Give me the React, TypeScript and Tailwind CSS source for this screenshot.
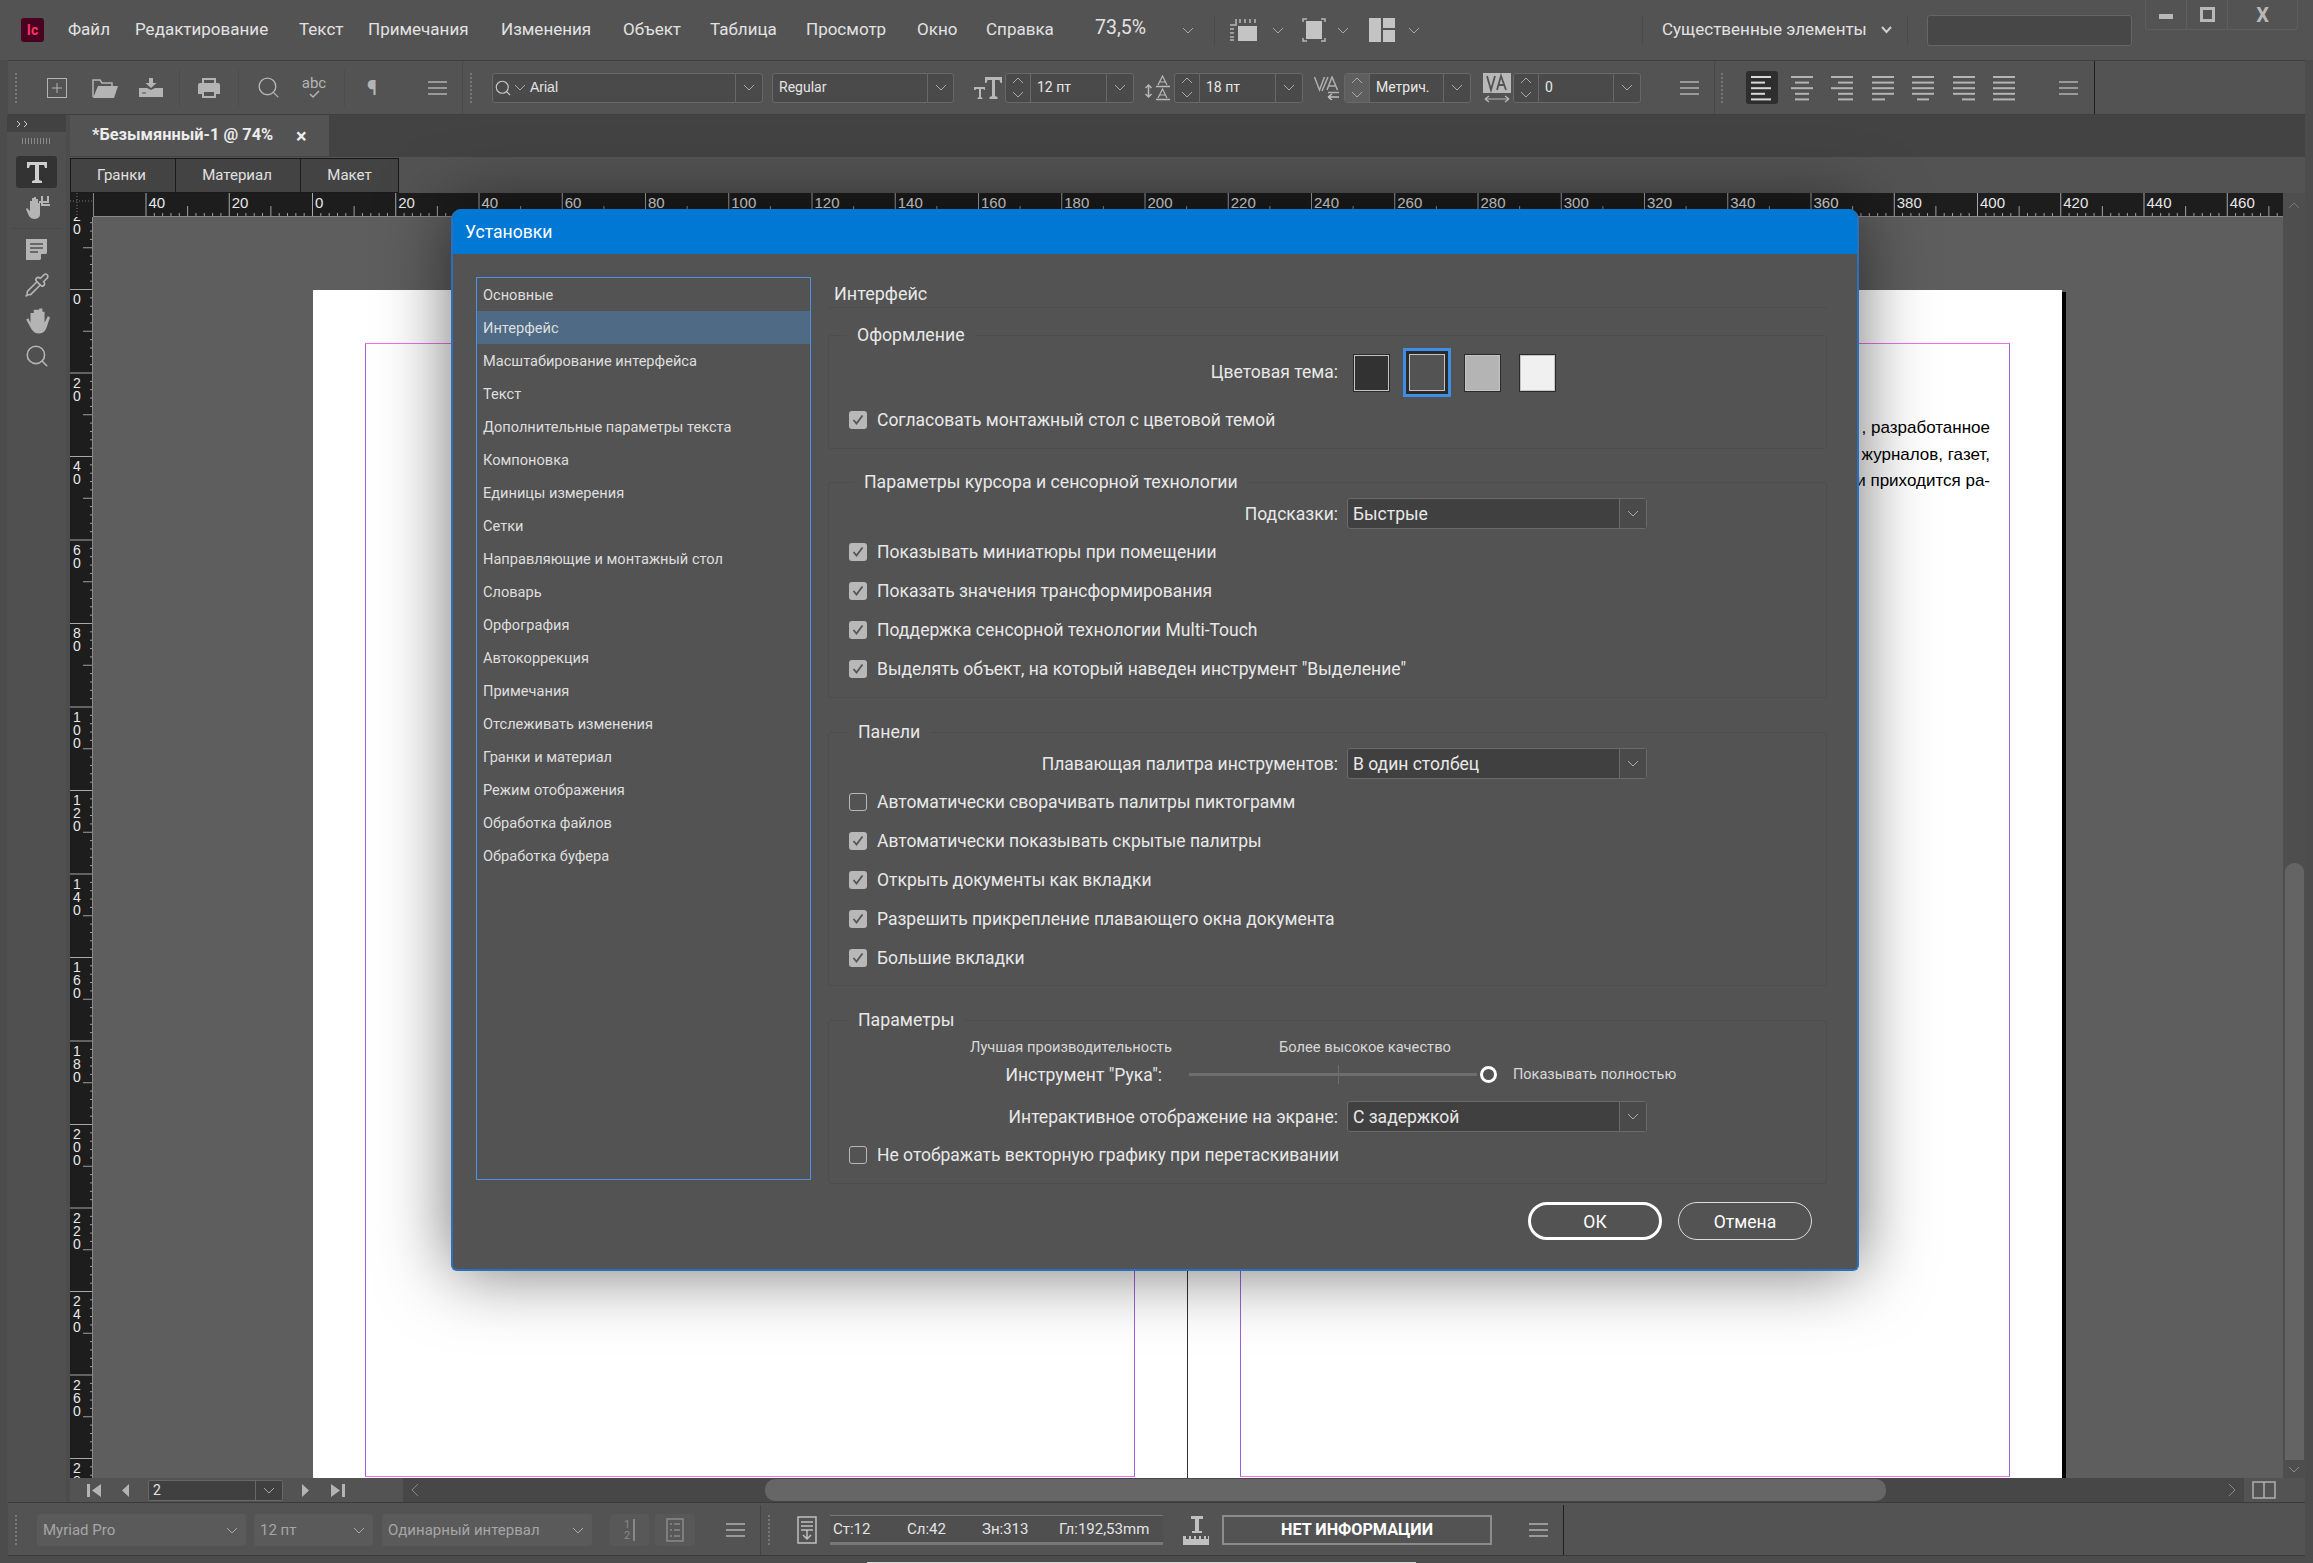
import type { ReactNode } from 'react'
import { Search, Pipette } from 'lucide-react'

const sideItems = [
  'Основные', 'Интерфейс', 'Масштабирование интерфейса', 'Текст', 'Дополнительные параметры текста',
  'Компоновка', 'Единицы измерения', 'Сетки', 'Направляющие и монтажный стол', 'Словарь', 'Орфография',
  'Автокоррекция', 'Примечания', 'Отслеживать изменения', 'Гранки и материал', 'Режим отображения',
  'Обработка файлов', 'Обработка буфера',
]

const menuItems = [
  { label: 'Файл', w: 'w-[67px]' },
  { label: 'Редактирование', w: 'w-[164px]' },
  { label: 'Текст', w: 'w-[69px]' },
  { label: 'Примечания', w: 'w-[133px]' },
  { label: 'Изменения', w: 'w-[122px]' },
  { label: 'Объект', w: 'w-[87px]' },
  { label: 'Таблица', w: 'w-[96px]' },
  { label: 'Просмотр', w: 'w-[111px]' },
  { label: 'Окно', w: 'w-[69px]' },
  { label: 'Справка', w: 'w-[109px]' },
]

const Chevron = ({ up = false, color = '#a8a8a8' }: { up?: boolean; color?: string }) => (
  <svg width="12" height="7" viewBox="0 0 12 7" className="flex-none">
    <path d={up ? 'M1 6L6 1L11 6' : 'M1 1L6 6L11 1'} fill="none" stroke={color} strokeWidth="1" />
  </svg>
)

const Burger = () => (
  <div className="flex w-[19px] flex-none flex-col gap-[4px]">
    <div className="h-[2px] bg-[#999999]" />
    <div className="h-[2px] bg-[#999999]" />
    <div className="h-[2px] bg-[#999999]" />
  </div>
)

const Grip = () => (
  <div className="h-[30px] w-[2px] flex-none border-l-2 border-dotted border-[#777777]" />
)

const Sep = ({ cls }: { cls: string }) => <div className={`h-[36px] w-px flex-none bg-[#4c4c4c] ${cls}`} />

const Field = ({ w, arrow, children }: { w: string; arrow: string; children: ReactNode }) => (
  <div className={`flex h-[30px] flex-none items-center rounded-[3px] border border-[#686868] bg-[#4a4a4a] text-[14px] text-[#e4e4e4] ${w}`}>
    <div className="min-w-0 flex-1 truncate pl-[6px]">{children}</div>
    <div className={`flex h-full flex-none items-center justify-center border-l border-[#686868] ${arrow}`}>
      <Chevron />
    </div>
  </div>
)

const Spin = ({ hot = false }: { hot?: boolean }) => (
  <div className={`flex h-full w-[25px] flex-none flex-col items-center justify-center gap-[7px] border-r border-[#686868] ${hot ? 'bg-[#5f5f5f]' : ''}`}>
    <Chevron up />
    <Chevron />
  </div>
)

const Combo = ({ w, label, hot = false }: { w: string; label: string; hot?: boolean }) => (
  <div className={`flex h-[30px] flex-none items-center rounded-[3px] border border-[#686868] bg-[#4a4a4a] text-[14px] text-[#e8e8e8] ${w}`}>
    <Spin hot={hot} />
    <div className="flex-1 pl-[6px]">{label}</div>
    <div className="flex h-full w-[27px] flex-none items-center justify-center border-l border-[#686868]">
      <Chevron />
    </div>
  </div>
)

const alignRows: [number, number][][] = [
  [[0, 20], [0, 14], [0, 20], [0, 14], [0, 20]],
  [[0, 22], [4, 18], [0, 22], [4, 18], [4, 18]],
  [[0, 22], [7, 22], [0, 22], [7, 22], [7, 22]],
  [[0, 22], [0, 22], [0, 22], [0, 22], [0, 13]],
  [[0, 22], [0, 22], [0, 22], [0, 22], [5, 17]],
  [[0, 22], [0, 22], [0, 22], [0, 22], [9, 22]],
  [[0, 22], [0, 22], [0, 22], [0, 22], [0, 22]],
]

const AlignIcon = ({ rows, color = '#b4b4b4' }: { rows: [number, number][]; color?: string }) => (
  <svg width="22" height="26" viewBox="0 0 22 26" className="flex-none">
    {rows.map(([a, b], i) => (
      <rect key={i} x={a} y={1 + i * 5.6} width={b - a} height="2" fill={color} />
    ))}
  </svg>
)

const TopIcons = () => (
  <>
    <svg width="20" height="20" viewBox="0 0 20 20" className="ml-[30px] flex-none">
      <rect x="0.5" y="0.5" width="19" height="19" fill="none" stroke="#b4b4b4" />
      <path d="M10 5v10M5 10h10" stroke="#b4b4b4" />
    </svg>
    <svg width="26" height="20" viewBox="0 0 26 20" className="ml-[25px] flex-none">
      <path d="M1 19V2h7l2 3h10v3" fill="none" stroke="#b4b4b4" strokeWidth="1.5" />
      <path d="M6 8h20l-4 12H1z" fill="#b4b4b4" />
    </svg>
    <svg width="24" height="20" viewBox="0 0 24 20" className="ml-[21px] flex-none">
      <path d="M10 0h4v5h3.500l-5.500 5-5.500-5H10z" fill="#b4b4b4" />
      <path d="M0 10h8l4 2 4-2h8v9H0z" fill="#b4b4b4" />
      <path d="M3 15h4" stroke="#535353" />
    </svg>
    <Sep cls="ml-[16px]" />
    <svg width="22" height="20" viewBox="0 0 22 20" className="ml-[18px] flex-none">
      <path d="M5 6V1h12v5" fill="none" stroke="#b4b4b4" strokeWidth="2" />
      <path d="M2 5h18a2 2 0 0 1 2 2v9h-5v-4H5v4H0V7a2 2 0 0 1 2-2z" fill="#b4b4b4" />
      <path d="M5 13h12v6H5z" fill="none" stroke="#b4b4b4" strokeWidth="2" />
    </svg>
    <Sep cls="ml-[18px]" />
    <Search size={25} strokeWidth={1.3} color="#b4b4b4" className="ml-[17px] flex-none" />
    <div className="ml-[21px] flex w-[24px] flex-none flex-col items-center text-[15px] leading-[14px] text-[#b4b4b4]">
      <span>abc</span>
      <svg width="11" height="9" viewBox="0 0 11 9">
        <path d="M1 4l3 3 6-6" fill="none" stroke="#b4b4b4" strokeWidth="1.5" />
      </svg>
    </div>
    <Sep cls="ml-[18px]" />
    <span className="ml-[22px] w-[13px] flex-none text-[20px] font-bold leading-none text-[#b4b4b4]">¶</span>
  </>
)

const Ruler = () => {
  const marks = Array.from({ length: 26 }, (_, i) => i - 2)
  const minors = Array.from({ length: 270 }, (_, i) => i)
  const x0 = 242
  return (
    <svg width="2213" height="24" viewBox="0 0 2213 24" className="block flex-none">
      <rect width="2213" height="24" fill="#1d1d1d" />
      <path d="M0 8h23M7 0v24" stroke="#777777" strokeDasharray="1 2" />
      <rect x="23" width="1" height="24" fill="#888888" />
      {minors.map((i) => {
        const x = x0 - 166.5 + i * 8.325
        if (x < 24 || x > 2213 || i % 10 === 0) return null
        return <rect key={i} x={x} y={i % 5 === 0 ? 13 : 20} width="1" height={i % 5 === 0 ? 10 : 3} fill="#a0a0a0" />
      })}
      {marks.map((m) => {
        const x = x0 + m * 83.25
        return (
          <g key={m}>
            <rect x={x} y="0" width="1" height="24" fill="#a8a8a8" />
            <text x={x + 3} y="15" fill="#e8e8e8" fontSize="15" fontFamily="'Liberation Sans', sans-serif">
              {Math.abs(m) * 20}
            </text>
          </g>
        )
      })}
      <rect x="23" y="23" width="2190" height="1" fill="#8a8a8a" />
    </svg>
  )
}

const VRuler = () => {
  const marks = Array.from({ length: 16 }, (_, i) => i - 1)
  const minors = Array.from({ length: 160 }, (_, i) => i - 10)
  return (
    <svg width="23" height="1261" viewBox="0 0 23 1261" className="block flex-none">
      <rect width="23" height="1261" fill="#1d1d1d" />
      {minors.map((i) =>
        i % 10 === 0 ? null : (
          <rect key={i} x={i % 5 === 0 ? 13 : 20} y={72 + i * 8.35} width={i % 5 === 0 ? 10 : 3} height="1" fill="#a0a0a0" />
        ),
      )}
      {marks.map((m) => {
        const y = 72 + m * 83.5
        return (
          <g key={m}>
            <rect x="0" y={y} width="23" height="1" fill="#a8a8a8" />
            {String(Math.abs(m) * 20).split('').map((d, k) => (
              <text key={k} x="7" y={y + 15 + k * 13} fill="#e8e8e8" fontSize="14" textAnchor="middle" fontFamily="'Liberation Sans', sans-serif">
                {d}
              </text>
            ))}
          </g>
        )
      })}
      <rect x="22" width="1" height="1261" fill="#8a8a8a" />
    </svg>
  )
}

const Tools = () => (
  <div className="flex w-[59px] flex-col bg-[#505050]">
    <div className="flex h-[17px] items-center pl-[3px] text-[13px] leading-none text-[#cfcfcf] bg-[#424242]">
      <svg width="14" height="8" viewBox="0 0 14 8" className="ml-[6px]">
        <path d="M1 1l3 3-3 3M8 1l3 3-3 3" fill="none" stroke="#d0d0d0" />
      </svg>
    </div>
    <div className="mx-[15px] mt-[6px] h-[6px] border-x-0 bg-[repeating-linear-gradient(90deg,#8a8a8a_0,#8a8a8a_1px,transparent_1px,transparent_3px)]" />
    <div className="ml-[9px] mt-[12px] flex h-[32px] w-[41px] items-center justify-center rounded-[3px] bg-[#333333]">
      <svg width="22" height="23" viewBox="0 0 22 23">
        <path d="M1 1h20v6h-2l-1-3h-5v15l3 1v2H6v-2l3-1V4H4L3 7H1z" fill="#cfcfcf" />
      </svg>
    </div>
    <div className="mt-[5px] flex h-[30px] items-center justify-center">
      <svg width="30" height="26" viewBox="0 0 30 26">
        <path d="M4 14l3 7c2 3 6 4 9 2 2-1 2-3 2-5V8l-2 0v5V4h-2v8V2h-2v10V3H10v10V6H8v10l-3-3z" fill="#b4b4b4" />
        <path d="M17 7h9V1M20 1v9h8" fill="none" stroke="#b4b4b4" strokeWidth="2" />
      </svg>
    </div>
    <div className="mx-[4px] mt-[5px] h-px bg-[#4a4a4a]" />
    <div className="mt-[9px] flex h-[22px] items-center justify-center">
      <svg width="21" height="21" viewBox="0 0 21 21">
        <path d="M0 0h21v14l-7 7H0z" fill="#b4b4b4" />
        <path d="M4 5h13M4 9h13M4 13h8" stroke="#505050" strokeWidth="1.5" />
        <path d="M15 21v-6h6z" fill="#505050" />
      </svg>
    </div>
    <div className="mt-[9px] flex h-[32px] items-center justify-center">
      <Pipette size={26} strokeWidth={1.5} color="#b4b4b4" />
    </div>
    <div className="mt-[3px] flex h-[32px] items-center justify-center">
      <svg width="26" height="27" viewBox="0 0 24 24">
        <path d="M2 11l5 9c2 3 4 4 7 4 4 0 6-3 7-6l3-9-2-1-3 6V4h-2v7V1h-3v10V2H9v10V5H6v9l-2-4z" fill="#b4b4b4" />
      </svg>
    </div>
    <div className="mt-[4px] flex h-[32px] items-center justify-center">
      <Search size={26} strokeWidth={1.5} color="#b4b4b4" />
    </div>
  </div>
)

const Check = ({ label, on = true }: { label: string; on?: boolean }) => (
  <div className="flex h-[39px] flex-none items-center pl-[20px]">
    {on ? (
      <div className="flex h-[18px] w-[18px] flex-none items-center justify-center rounded-[3px] bg-[#b8b8b8]">
        <svg width="12" height="11" viewBox="0 0 12 11">
          <path d="M1.5 6l3 3.500 6-8" fill="none" stroke="#555555" strokeWidth="1.8" />
        </svg>
      </div>
    ) : (
      <div className="h-[18px] w-[18px] flex-none rounded-[3px] border border-[#b8b8b8]" />
    )}
    <span className="ml-[10px] whitespace-nowrap pt-[2px]">{label}</span>
  </div>
)

const SelectRow = ({ label, value, cls = '' }: { label: string; value: string; cls?: string }) => (
  <div className={`flex h-[31px] flex-none items-center ${cls}`}>
    <div className="w-[509px] flex-none whitespace-nowrap pt-[2px] text-right">{label}</div>
    <div className="ml-[9px] flex h-[31px] w-[300px] flex-none items-center rounded-[3px] border border-[#6a6a6a] bg-[#404040]">
      <div className="flex-1 pl-[5px] pt-[2px]">{value}</div>
      <div className="flex h-full w-[27px] items-center justify-center border-l border-[#6a6a6a] bg-[#4a4a4a]">
        <Chevron />
      </div>
    </div>
  </div>
)

const Group = ({ title, left, cls, children }: { title: string; left: string; cls: string; children: ReactNode }) => (
  <div className={`relative flex flex-none flex-col rounded-[3px] border border-[#4d4d4d] ${cls}`}>
    <div className={`absolute top-[-13px] h-[24px] bg-[#535353] px-[10px] text-[17.7px] leading-[25px] text-[#e8e8e8] ${left}`}>{title}</div>
    {children}
  </div>
)

const Swatch = ({ bg }: { bg: string }) => (
  <div className={`h-[38px] w-[37px] flex-none border border-[#2a2a2a] shadow-[inset_0_0_0_1px_#c4c4c4] ${bg}`} />
)

const Dialog = () => (
  <div className="absolute left-[451px] top-[209px] z-10 flex h-[1062px] w-[1408px] flex-col overflow-hidden rounded-[10px] rounded-b-[6px] border-2 border-t-0 border-[#2c6fbf] bg-[#535353] font-['Roboto',sans-serif] text-[17.5px] text-[#e8e8e8] shadow-[0_0_70px_rgba(0,0,0,0.55)]">
    <div className="-mx-[2px] flex h-[45px] flex-none items-center bg-[#0078d4] pl-[14px] pt-[2px] text-[17.600px] text-white">Установки</div>
    <div className="flex flex-1 pl-[23px] pt-[23px]">
      <div className="h-[903px] w-[335px] flex-none border border-[#4b93e0]">
        {sideItems.map((s) => (
          <div key={s} className={`flex h-[33px] items-center pl-[6px] pt-[2px] text-[14.6px] text-[#dedede] ${s === 'Интерфейс' ? 'bg-[#4e6a85]' : ''}`}>
            {s}
          </div>
        ))}
      </div>
      <div className="ml-[17px] flex w-[999px] flex-none flex-col">
        <div className="h-[31px] flex-none border-b border-[#4d4d4d] pl-[6px] text-[18px] leading-[33px]">Интерфейс</div>
        <Group title="Оформление" left="left-[18px]" cls="mt-[27px] h-[114px]">
          <div className="mt-[12px] flex h-[49px] flex-none items-center">
            <div className="w-[509px] flex-none text-right">Цветовая тема:</div>
            <div className="ml-[15px]"><Swatch bg="bg-[#323232]" /></div>
            <div className="ml-[13px] flex h-[49px] w-[48px] flex-none items-center justify-center border-[3px] border-[#3d8fe6] bg-[#2a2a2a]">
              <div className="h-[37px] w-[36px] border border-[#c4c4c4] bg-[#535353]" />
            </div>
            <div className="ml-[13px]"><Swatch bg="bg-[#b4b4b4]" /></div>
            <div className="ml-[18px]"><Swatch bg="bg-[#f0f0f0]" /></div>
          </div>
          <div className="mt-[3px]">
            <Check label="Согласовать монтажный стол с цветовой темой" />
          </div>
        </Group>
        <Group title="Параметры курсора и сенсорной технологии" left="left-[25px]" cls="mt-[33px] h-[216px]">
          <SelectRow label="Подсказки:" value="Быстрые" cls="mt-[15px]" />
          <div className="mt-[3px] flex flex-col">
            <Check label="Показывать миниатюры при помещении" />
            <Check label="Показать значения трансформирования" />
            <Check label="Поддержка сенсорной технологии Multi-Touch" />
            <Check label='Выделять объект, на который наведен инструмент "Выделение"' />
          </div>
        </Group>
        <Group title="Панели" left="left-[19px]" cls="mt-[34px] h-[254px]">
          <SelectRow label="Плавающая палитра инструментов:" value="В один столбец" cls="mt-[15px]" />
          <div className="mt-[3px] flex flex-col">
            <Check label="Автоматически сворачивать палитры пиктограмм" on={false} />
            <Check label="Автоматически показывать скрытые палитры" />
            <Check label="Открыть документы как вкладки" />
            <Check label="Разрешить прикрепление плавающего окна документа" />
            <Check label="Большие вкладки" />
          </div>
        </Group>
        <Group title="Параметры" left="left-[19px]" cls="mt-[34px] h-[164px]">
          <div className="mt-[16px] flex h-[20px] flex-none items-center pt-[1px] text-[14.7px] text-[#d8d8d8]">
            <div className="ml-[141px] w-[309px] flex-none whitespace-nowrap">Лучшая производительность</div>
            <div className="whitespace-nowrap">Более высокое качество</div>
          </div>
          <div className="mt-[2px] flex h-[30px] flex-none items-center">
            <div className="w-[333px] flex-none pt-[2px] text-right">Инструмент "Рука":</div>
            <div className="relative ml-[27px] h-[3px] w-[288px] flex-none bg-[#6e6e6e]">
              <div className="absolute left-[149px] top-[-8px] h-[19px] w-px bg-[#6e6e6e]" />
            </div>
            <div className="ml-[3px] h-[17px] w-[17px] flex-none rounded-full border-[3px] border-white" />
            <div className="ml-[16px] whitespace-nowrap pt-[1px] text-[14.5px] text-[#d8d8d8]">Показывать полностью</div>
          </div>
          <SelectRow label="Интерактивное отображение на экране:" value="С задержкой" cls="mt-[12px]" />
          <div className="mt-[3px]">
            <Check label="Не отображать векторную графику при перетаскивании" on={false} />
          </div>
        </Group>
        <div className="mt-[18px] flex flex-none justify-end gap-[16px] pr-[15px]">
          <button className="h-[38px] w-[134px] rounded-full border-[3px] border-white pt-[2px] text-[17.5px] text-white">ОК</button>
          <button className="h-[38px] w-[134px] rounded-full border border-[#dddddd] pt-[2px] text-[17.5px] text-white">Отмена</button>
        </div>
      </div>
    </div>
  </div>
)

export default function App() {
  return (
    <div className="relative flex h-[1563px] w-[2313px] flex-col overflow-hidden bg-[#4c4c4c] font-['Roboto',sans-serif]">
      {/* menu bar */}
      <div className="flex h-[60px] flex-none items-center bg-[#535353] text-[17px] text-[#e2e2e2]">
        <div className="ml-[21px] flex h-[24px] w-[23px] flex-none items-center justify-center rounded-[3px] bg-[#49021f] text-[14px] font-bold text-[#ff3366]">Ic</div>
        <div className="ml-[24px] flex flex-none">
          {menuItems.map((m) => (
            <div key={m.label} className={`whitespace-nowrap ${m.w}`}>{m.label}</div>
          ))}
        </div>
        <div className="w-[87px] flex-none pb-[4px] text-[19.5px]">73,5%</div>
        <Chevron />
        <div className="ml-[20px] h-[30px] w-px flex-none bg-[#4a4a4a]" />
        <svg width="27" height="22" viewBox="0 0 27 22" className="ml-[15px] flex-none">
          <path d="M8 7h19v15H8z" fill="#c4c4c4" />
          <path d="M0 6h6V0M0 10h4M0 14h4M0 18h4M0 21h4M10 0v4M15 0v4M20 0v4M25 0v4" fill="none" stroke="#b8b8b8" strokeWidth="1.5" />
        </svg>
        <div className="ml-[15px]"><Chevron /></div>
        <svg width="24" height="24" viewBox="0 0 24 24" className="ml-[18px] flex-none">
          <path d="M4 3h16v18H4z" fill="#c4c4c4" />
          <path d="M1 4V1h4M19 1h4v3M1 20v3h4M19 23h4v-3" fill="none" stroke="#b8b8b8" strokeWidth="1.5" />
        </svg>
        <div className="ml-[11px]"><Chevron /></div>
        <svg width="26" height="24" viewBox="0 0 26 24" className="ml-[20px] flex-none">
          <path d="M0 0h12v24H0zM14 0h12v10H14zM14 12h12v12H14z" fill="#c4c4c4" />
        </svg>
        <div className="ml-[13px]"><Chevron /></div>
        <div className="ml-[222px] h-[30px] w-px flex-none bg-[#4a4a4a]" />
        <div className="ml-[19px] w-[219px] flex-none whitespace-nowrap">Существенные элементы</div>
        <svg width="11" height="8" viewBox="0 0 11 8" className="flex-none">
          <path d="M1 1l4.500 5L10 1" fill="none" stroke="#d0d0d0" strokeWidth="2" />
        </svg>
        <div className="ml-[15px] h-[30px] w-px flex-none bg-[#4a4a4a]" />
        <div className="ml-[19px] h-[31px] w-[205px] flex-none rounded-[3px] border border-[#666666] bg-[#474747]" />
        <div className="mb-[29px] ml-[13px] flex h-[30px] w-[153px] flex-none items-center self-start rounded-b-[3px] border border-t-0 border-[#5e5e5e]">
          <div className="flex h-full w-[41px] items-center justify-center border-r border-[#5e5e5e]">
            <div className="mt-[4px] h-[5px] w-[14px] bg-[#b8b8b8]" />
          </div>
          <div className="flex h-full w-[41px] items-center justify-center border-r border-[#5e5e5e]">
            <div className="h-[15px] w-[15px] border-[3px] border-[#b8b8b8]" />
          </div>
          <div className="flex-1 text-center text-[20px] font-bold text-[#b8b8b8]">X</div>
        </div>
      </div>

      {/* control bar */}
      <div className="mx-[8px] flex h-[55px] flex-none items-center border-y border-[#3f3f3f] bg-[#535353]">
        <div className="ml-[7px]"><Grip /></div>
        <TopIcons />
        <div className="ml-[48px]"><Burger /></div>
        <div className="ml-[15px] h-full w-px flex-none bg-[#484848]" />
        <div className="ml-[7px]"><Grip /></div>
        <div className="ml-[20px]">
          <Field w="w-[271px]" arrow="w-[27px]">
            <div className="flex items-center gap-[2px] pl-0">
              <Search size={18} strokeWidth={1.5} color="#c8c8c8" className="-ml-[5px]" />
              <Chevron />
              <span className="ml-[2px] font-['Liberation_Sans',sans-serif]">Arial</span>
            </div>
          </Field>
        </div>
        <div className="ml-[9px]"><Field w="w-[182px]" arrow="w-[26px]">Regular</Field></div>
        <svg width="28" height="24" viewBox="0 0 28 24" className="ml-[20px] flex-none">
          <path d="M11 1h17v6h-1.500l-1-3H21v16l2.500 1v2h-8v-2l2.500-1V4h-4.500l-1 3H11z" fill="#b8b8b8" />
          <path d="M0 11h11v3h-1l-.5-1H7v8l1.500 1v1h-5v-1L5 21v-8H2l-.5 1H0z" fill="#b8b8b8" />
        </svg>
        <div className="ml-[3px]"><Combo w="w-[129px]" label="12 пт" /></div>
        <svg width="26" height="26" viewBox="0 0 26 26" className="ml-[11px] flex-none">
          <path d="M3.500 10v12M0.500 13l3-3 3 3M0.500 19l3 3 3-3" fill="none" stroke="#b8b8b8" strokeWidth="1.5" />
          <path d="M13 10l4.500-9 4.500 9M14.500 7h6M13 23l4.500-9 4.500 9M14.500 20h6" fill="none" stroke="#b8b8b8" strokeWidth="1.2" />
          <path d="M11 11.500h14M11 24.500h14" stroke="#b8b8b8" strokeWidth="1.5" />
        </svg>
        <div className="ml-[3px]"><Combo w="w-[129px]" label="18 пт" /></div>
        <svg width="26" height="24" viewBox="0 0 26 24" className="ml-[11px] flex-none">
          <path d="M0.500 1l5 13 5-13M8 15l6-14M13 14l5-13 5.500 13M15 10h7" fill="none" stroke="#b0b0b0" strokeWidth="1.5" />
          <path d="M14 16.500h11" stroke="#b0b0b0" strokeWidth="1.5" />
          <path d="M25 21H14M14 21l4-3M14 21l4 3" fill="none" stroke="#c0c0c0" strokeWidth="1.5" />
        </svg>
        <div className="ml-[4px]"><Combo w="w-[127px]" label="Метрич." hot /></div>
        <svg width="28" height="30" viewBox="0 0 28 30" className="ml-[12px] flex-none">
          <rect width="28" height="20" fill="#b8b8b8" />
          <path d="M4 3l4 14 4-14M14 17l4-14 5 14M15 12h7" fill="none" stroke="#535353" strokeWidth="1.8" />
          <path d="M2 26h24M2 26l4-3M2 26l4 3M26 26l-4-3M26 26l-4 3" fill="none" stroke="#b8b8b8" strokeWidth="1.2" />
        </svg>
        <div className="ml-[2px]"><Combo w="w-[128px]" label="0" /></div>
        <div className="ml-[39px]"><Burger /></div>
        <div className="ml-[15px] h-full w-px flex-none bg-[#484848]" />
        <div className="ml-[6px]"><Grip /></div>
        <div className="ml-[23px] flex h-[33px] w-[32px] flex-none items-center justify-center rounded-[3px] bg-[#2e2e2e]">
          <AlignIcon rows={alignRows[0]} color="#d8d8d8" />
        </div>
        <div className="ml-[13px] flex flex-none gap-[18.4px]">
          {alignRows.slice(1).map((r, i) => (
            <AlignIcon key={i} rows={r} />
          ))}
        </div>
        <div className="ml-[44px]"><Burger /></div>
        <div className="ml-[16px] h-full w-px flex-none bg-[#1f1f1f]" />
      </div>

      {/* tool strip + document */}
      <div className="flex h-[1387px] flex-none pl-[7px]">
        <Tools />
        <div className="ml-[4px] flex w-[2235px] flex-none flex-col">
          <div className="flex h-[42px] flex-none bg-[#434343]">
            <div className="flex h-[41px] w-[259px] flex-none items-center bg-[#535353] pl-[22px] text-[16.4px] font-bold text-[#ececec]">
              <span className="w-[204px] whitespace-nowrap">*Безымянный-1 @ 74%</span>
              <span className="text-[20px] leading-none">×</span>
            </div>
          </div>
          <div className="flex h-[36px] flex-none items-start bg-[#535353] pt-px">
            <div className="flex h-[35px] flex-none border border-[#1a1a1a] text-[15px] text-[#e0e0e0]">
              <div className="flex w-[105px] items-center justify-center border-r border-[#1a1a1a] bg-[#434343] pr-[3px]">Гранки</div>
              <div className="flex w-[125px] items-center justify-center border-r border-[#1a1a1a] bg-[#434343] pr-[2px]">Материал</div>
              <div className="flex w-[97px] items-center justify-center bg-[#434343]">Макет</div>
            </div>
          </div>
          <div className="flex h-[1285px] flex-none">
            <div className="flex w-[2213px] flex-none flex-col">
              <Ruler />
              <div className="flex h-[1261px] flex-none">
                <VRuler />
                <div className="relative flex-1 overflow-hidden bg-[#5e5e5e]">
                  {/* pasteboard: the spread sits at a free position */}
                  <div className="absolute bottom-0 left-[220px] top-[73px] w-[1749px] bg-white" />
                  <div className="absolute bottom-0 left-[1969px] top-[75px] w-[4px] bg-black" />
                  <div className="absolute bottom-0 left-[1094px] top-[73px] w-px bg-[#333333]" />
                  <div className="absolute left-[272px] top-[126px] h-[1134px] w-[770px] border-x border-y border-x-[#a060e0] border-y-[#f070f0]" />
                  <div className="absolute left-[1147px] top-[126px] h-[1134px] w-[770px] border-x border-y border-x-[#a060e0] border-y-[#f070f0]" />
                  <div className="absolute left-[1700px] top-[198px] w-[197px] text-right font-['Liberation_Sans',sans-serif] text-[17px] leading-[26.5px] text-black">
                    <div>, разработанное</div>
                    <div>журналов, газет,</div>
                    <div>и приходится ра-</div>
                  </div>
                </div>
              </div>
            </div>
            <div className="flex w-[22px] flex-none flex-col items-center bg-[#4e4e4e]">
              <div className="flex h-[24px] flex-none items-center"><Chevron up color="#777777" /></div>
              <div className="mt-[646px] h-[597px] w-[19px] flex-none rounded-t-[9px] bg-[#646464]" />
              <div className="mt-auto flex h-[18px] flex-none items-center"><Chevron color="#888888" /></div>
            </div>
          </div>
          <div className="flex h-[24px] flex-none items-center bg-[#535353]">
            <svg width="16" height="13" viewBox="0 0 16 13" className="ml-[17px] flex-none"><path d="M0 0h3v13H0zM14 0v13L5 6.500z" fill="#b4b4b4" /></svg>
            <svg width="8" height="13" viewBox="0 0 8 13" className="ml-[19px] flex-none"><path d="M7 0v13L0 6.500z" fill="#b4b4b4" /></svg>
            <div className="ml-[18px] flex h-[21px] w-[135px] flex-none items-center rounded-[2px] border border-[#686868] bg-[#404040] text-[14px] text-[#e4e4e4]">
              <div className="flex-1 pl-[4px]">2</div>
              <div className="flex h-full w-[27px] items-center justify-center border-l border-[#686868]"><Chevron /></div>
            </div>
            <svg width="8" height="13" viewBox="0 0 8 13" className="ml-[19px] flex-none"><path d="M0 0v13L7 6.500z" fill="#b4b4b4" /></svg>
            <svg width="14" height="13" viewBox="0 0 14 13" className="ml-[21px] flex-none"><path d="M0 0v13L9 6.500zM11 0h3v13h-3z" fill="#b4b4b4" /></svg>
            <div className="ml-[58px] flex h-full w-[1841px] flex-none items-center bg-[#474747]">
              <svg width="8" height="14" viewBox="0 0 8 14" className="ml-[8px] flex-none"><path d="M7 1L1 7l6 6" fill="none" stroke="#888888" /></svg>
              <div className="ml-[346px] h-[22px] w-[1121px] flex-none rounded-l-[10px] rounded-r-[10px] bg-[#666666]" />
              <svg width="8" height="14" viewBox="0 0 8 14" className="ml-auto mr-[8px] flex-none"><path d="M1 1l6 6-6 6" fill="none" stroke="#888888" /></svg>
            </div>
            <svg width="24" height="18" viewBox="0 0 24 18" className="ml-[8px] flex-none">
              <rect x="1" y="1" width="22" height="16" fill="none" stroke="#b0b0b0" strokeWidth="1.5" />
              <path d="M12 1v16" stroke="#b0b0b0" strokeWidth="1.5" />
            </svg>
          </div>
        </div>
      </div>

      {/* status bar */}
      <div className="mx-[8px] flex h-[54px] flex-none items-center border-y border-[#3a3a3a] bg-[#535353] pt-[2px] text-[15px]">
        <div className="ml-[7px]"><Grip /></div>
        <div className="ml-[20px] flex h-[32px] w-[209px] flex-none items-center justify-between rounded-[3px] bg-[#5a5a5a] pl-[6px] pr-[8px] text-[#a6a6a6]">Myriad Pro<Chevron /></div>
        <div className="ml-[8px] flex h-[32px] w-[119px] flex-none items-center justify-between rounded-[3px] bg-[#5a5a5a] pl-[6px] pr-[8px] text-[#a6a6a6]">12 пт<Chevron /></div>
        <div className="ml-[9px] flex h-[32px] w-[210px] flex-none items-center justify-between rounded-[3px] bg-[#5a5a5a] pl-[6px] pr-[8px] text-[#a6a6a6]">Одинарный интервал<Chevron /></div>
        <div className="ml-[18px] flex h-[32px] w-[39px] flex-none items-center justify-center rounded-[3px] bg-[#585858] text-[11px] leading-[11px] text-[#888888]">
          <span className="flex flex-col items-center"><span>1</span><span>2</span></span>
          <span className="ml-[3px] h-[22px] w-[2px] bg-[#888888]" />
        </div>
        <div className="ml-[6px] flex h-[32px] w-[40px] flex-none items-center justify-center rounded-[3px] bg-[#585858]">
          <svg width="18" height="24" viewBox="0 0 18 24">
            <rect x="1" y="1" width="16" height="22" fill="none" stroke="#8a8a8a" strokeWidth="1.5" />
            <path d="M4 6h2M8 6h6M4 12h2M8 12h6M4 18h2M8 18h6" stroke="#8a8a8a" strokeWidth="1.5" />
          </svg>
        </div>
        <div className="ml-[31px]"><Burger /></div>
        <div className="ml-[15px] h-full w-px flex-none bg-[#444444]" />
        <div className="ml-[7px]"><Grip /></div>
        <svg width="20" height="28" viewBox="0 0 20 28" className="ml-[27px] flex-none">
          <rect x="1" y="1" width="18" height="26" fill="none" stroke="#c0c0c0" strokeWidth="1.5" />
          <path d="M4 6h12M4 10h12M4 14h12M10 14v8M6 19l4 4 4-4" fill="none" stroke="#c0c0c0" strokeWidth="1.5" />
        </svg>
        <div className="ml-[13px] flex h-[30px] w-[333px] flex-none items-center border-y border-t-[#777777] border-b-[3px] border-b-[#777777] bg-[#4f4f4f] pl-[3px] text-[#e4e4e4]">
          <div className="w-[74px] flex-none">Ст:12</div>
          <div className="w-[75px] flex-none">Сл:42</div>
          <div className="w-[77px] flex-none">Зн:313</div>
          <div className="whitespace-nowrap">Гл:192,53mm</div>
        </div>
        <svg width="28" height="30" viewBox="0 0 28 30" className="ml-[20px] flex-none">
          <path d="M8 1h12v3h-4v12h3v2H9v-2h3V4H8z" fill="#c0c0c0" />
          <path d="M0 21h3v3h3v-3h2v3h3v-3h2v3h3v-3h2v3h3v-3h2v3h2v-3h1v9H0z" fill="#c0c0c0" />
        </svg>
        <div className="ml-[11px] flex h-[30px] w-[270px] flex-none items-center justify-center border-2 border-[#8c8c8c] text-[16.2px] font-bold text-white">НЕТ ИНФОРМАЦИИ</div>
        <div className="ml-[37px]"><Burger /></div>
        <div className="ml-[15px] h-full w-px flex-none bg-[#1f1f1f]" />
      </div>
      <div className="ml-[867px] mt-auto h-px w-[549px] flex-none bg-[#d8d8d8]" />

      <Dialog />
    </div>
  )
}
